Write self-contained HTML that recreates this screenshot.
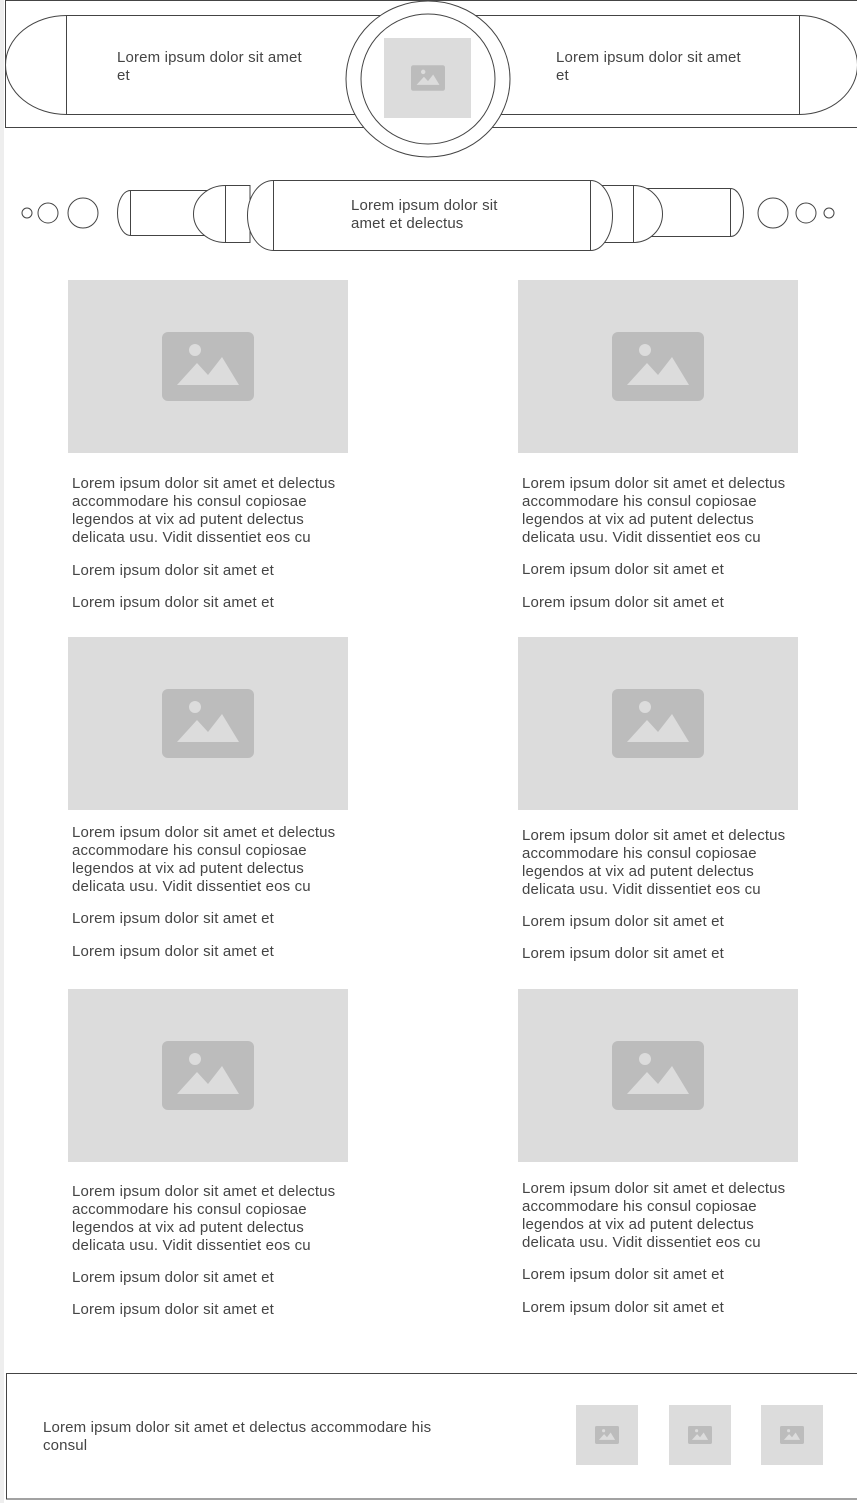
<!DOCTYPE html>
<html><head><style>
body{margin:0;width:857px;height:1503px;background:#fff;position:relative;overflow:hidden;font-family:"Liberation Sans",sans-serif;color:#444;font-size:15px}
.strip{position:absolute;left:0;top:0;width:4px;height:1503px;background:#eee}
.t{position:absolute;line-height:18px;font-size:15px;letter-spacing:0.15px;color:#444;white-space:nowrap;margin-top:1px}
.img{position:absolute;background:#dcdcdc}
svg{position:absolute;left:0;top:0}
</style></head><body>
<div class="strip"></div>
<svg width="857" height="1503" fill="none" stroke="#444" stroke-width="1">
<rect x="5.5" y="0.5" width="852" height="127" fill="#fff"/>
<path d="M66.5 15.5 H799.5 A58 49.5 0 0 1 799.5 114.5 H66.5 A61 49.5 0 0 1 66.5 15.5 Z" fill="#fff"/>
<line x1="66.5" y1="15.5" x2="66.5" y2="114.5"/>
<line x1="799.5" y1="15.5" x2="799.5" y2="114.5"/>
<ellipse cx="428" cy="79" rx="82" ry="78" fill="#fff"/>
<ellipse cx="428" cy="79" rx="67" ry="65"/>
<circle cx="27" cy="213" r="5"/><circle cx="48" cy="213" r="10"/><circle cx="83" cy="213" r="15"/>
<circle cx="829" cy="213" r="5"/><circle cx="806" cy="213" r="10"/><circle cx="773" cy="213" r="15"/>
<path d="M130.5 190.5 H225 V235.5 H130.5 A13 22.5 0 0 1 130.5 190.5 Z" fill="#fff"/>
<line x1="130.5" y1="190.5" x2="130.5" y2="235.5"/>
<path d="M225.5 185.5 H250 V242.5 H225.5 A32 28.5 0 0 1 225.5 185.5 Z" fill="#fff"/>
<line x1="225.5" y1="185.5" x2="225.5" y2="242.5"/>
<path d="M730.5 188.5 H633 V236.5 H730.5 A13 24 0 0 0 730.5 188.5 Z" fill="#fff"/>
<line x1="730.5" y1="188.5" x2="730.5" y2="236.5"/>
<path d="M633.5 185.5 H600 V242.5 H633.5 A29 28.5 0 0 0 633.5 185.5 Z" fill="#fff"/>
<line x1="633.5" y1="185.5" x2="633.5" y2="242.5"/>
<path d="M273.5 180.5 H590.5 A22 35 0 0 1 590.5 250.5 H273.5 A26 35 0 0 1 273.5 180.5 Z" fill="#fff"/>
<line x1="273.5" y1="180.5" x2="273.5" y2="250.5"/>
<line x1="590.5" y1="180.5" x2="590.5" y2="250.5"/>
<rect x="6.5" y="1373.5" width="851" height="125.5"/>
</svg>
<div class="img" style="left:384px;top:38px;width:87px;height:80px"></div>
<div class="t" style="left:117px;top:48px">Lorem ipsum dolor sit amet<br>et</div>
<div class="t" style="left:556px;top:48px">Lorem ipsum dolor sit amet<br>et</div>
<div class="t" style="left:351px;top:196px">Lorem ipsum dolor sit<br>amet et delectus</div>

<div id="cards"></div>
<div class="t" style="left:43px;top:1418px">Lorem ipsum dolor sit amet et delectus accommodare his<br>consul</div>
<script>
const ico=(w,h)=>`<svg style="position:absolute;left:50%;top:50%;margin-left:${-w/2}px;margin-top:${-h/2}px" width="${w}" height="${h}" viewBox="0 0 92 69"><rect width="92" height="69" rx="6" fill="#bcbcbc"/><circle cx="33" cy="18" r="6" fill="#dcdcdc"/><path d="M15 53 L35 31 L46 43 L60 25 L77 53 Z" fill="#dcdcdc"/></svg>`;
let h='';
const P='Lorem ipsum dolor sit amet et delectus<br>accommodare his consul copiosae<br>legendos at vix ad putent delectus<br>delicata usu. Vidit dissentiet eos cu';
const rows=[[280,474,561,593,474,560,593],[637,823,909,942,826,912,944],[989,1182,1268,1300,1179,1265,1298]];
rows.forEach(r=>{[[68,1],[518,4]].forEach(([x,o])=>{
h+=`<div class="img" style="left:${x}px;top:${r[0]}px;width:280px;height:173px">${ico(92,69)}</div>`;
h+=`<div class="t" style="left:${x+4}px;top:${r[o]}px">${P}</div>`;
h+=`<div class="t" style="left:${x+4}px;top:${r[o+1]}px">Lorem ipsum dolor sit amet et</div>`;
h+=`<div class="t" style="left:${x+4}px;top:${r[o+2]}px">Lorem ipsum dolor sit amet et</div>`;});});
[576,669,761].forEach(x=>{h+=`<div class="img" style="left:${x}px;top:1405px;width:62px;height:60px">${ico(24,18)}</div>`;});
document.getElementById('cards').innerHTML=h;
document.querySelector('.img').innerHTML=ico(34,26);
</script>
</body></html>
